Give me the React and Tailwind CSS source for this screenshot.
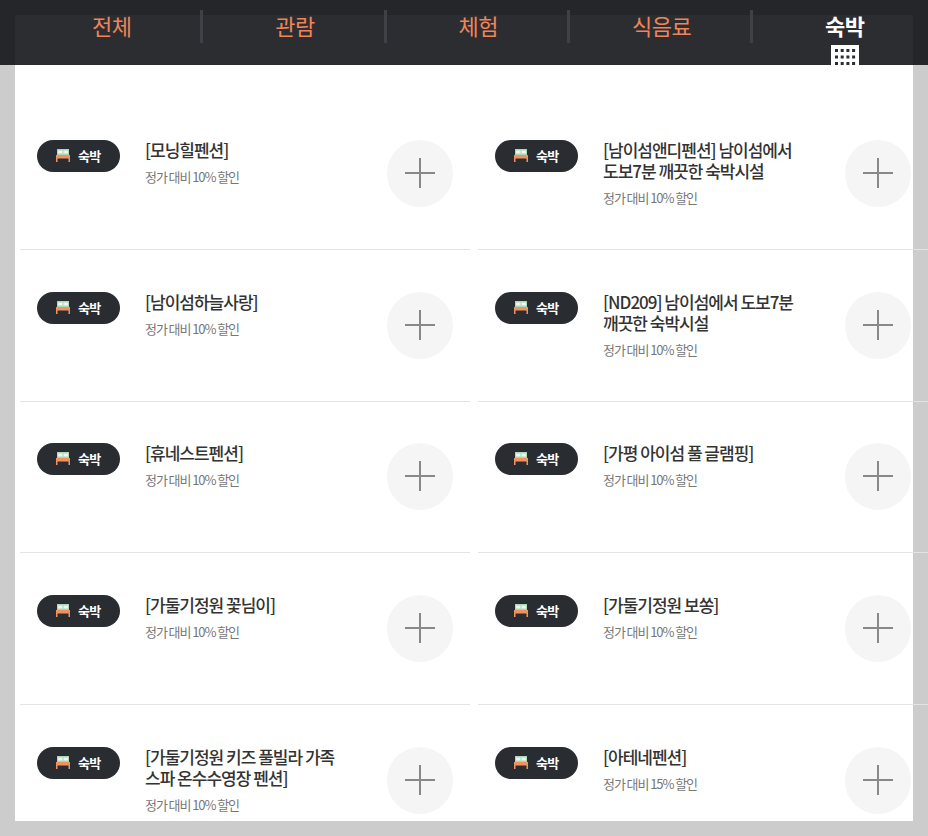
const font = { fontFamily: '"Noto Sans CJK KR", "Noto Sans", sans-serif' };

const items = [
  [["[모닝힐펜션]"], "10%"],
  [["[남이섬앤디펜션] 남이섬에서", "도보7분 깨끗한 숙박시설"], "10%"],
  [["[남이섬하늘사랑]"], "10%"],
  [["[ND209] 남이섬에서 도보7분", "깨끗한 숙박시설"], "10%"],
  [["[휴네스트펜션]"], "10%"],
  [["[가평 아이섬 풀 글램핑]"], "10%"],
  [["[가둘기정원 꽃님이]"], "10%"],
  [["[가둘기정원 보쏭]"], "10%"],
  [["[가둘기정원 키즈 풀빌라 가족", "스파 온수수영장 펜션]"], "10%"],
  [["[아테네펜션]"], "15%"],
];

function Bed() {
  return (
    <svg width="14" height="13" viewBox="0 0 14 13" className="shrink-0">
      <rect x="1" y="0" width="12" height="6" fill="#a8d8b8" />
      <rect x="2" y="1.5" width="4.5" height="3" fill="#eef5ee" />
      <rect x="7.5" y="1.5" width="4.5" height="3" fill="#eef5ee" />
      <rect x="0" y="6" width="14" height="3.5" fill="#f0915f" />
      <rect x="0" y="9" width="1.5" height="4" fill="#f0915f" />
      <rect x="12.5" y="9" width="1.5" height="4" fill="#f0915f" />
    </svg>
  );
}

function Building() {
  const dots = [];
  for (let r = 0; r < 4; r++) {
    for (let c = 0; c < 4; c++) {
      dots.push(<rect key={r + "-" + c} x={4 + c * 5.7} y={4 + r * 6.5} width="3" height="3" fill="#2a2d32" />);
    }
  }
  return (
    <svg width="28" height="28" viewBox="0 0 28 28" className="mt-[4px] shrink-0">
      <rect width="28" height="28" fill="#fff" />
      {dots}
    </svg>
  );
}

function Row({ lines, pct }) {
  return (
    <li className="h-[151.667px] border-b border-[#e4e4e4] flex items-start pt-[41.66px] pl-[17px]">
      <div className="w-[83px] h-[32px] rounded-full bg-[#292c31] flex items-center shrink-0 pl-[19px] gap-[8px] pb-[1px]">
        <Bed />
        <span className="text-[13px] leading-none font-bold text-white tracking-[-0.6px]">숙박</span>
      </div>
      <div className="w-[222px] ml-[25px] mt-[-1px] shrink-0">
        {lines.map((l) => (
          <p key={l} className="text-[17px] leading-[21px] font-medium text-[#333] tracking-[-1px] whitespace-nowrap">{l}</p>
        ))}
        <p className="text-[13px] leading-[18px] mt-[8px] text-[#777] tracking-[-1.08px] whitespace-nowrap">정가 대비 {pct} 할인</p>
      </div>
      <div className="w-[66px] h-[67px] ml-[20px] rounded-full bg-[#f5f5f5] relative shrink-0">
        <span className="absolute left-[18px] top-[32px] w-[30px] h-[2px] bg-[#888]" />
        <span className="absolute left-[32px] top-[18px] w-[2px] h-[30px] bg-[#888]" />
      </div>
    </li>
  );
}

export default function App() {
  const nav = ["전체", "관람", "체험", "식음료"];
  return (
    <div className="relative h-[836px] w-[928px] overflow-hidden bg-[#cccccc] pt-[15px] pl-[15px]" style={font}>
      <main className="w-[898px] h-[806px] bg-white">
        <ul className="grid grid-cols-[450px_450px] gap-x-[8px] w-[908px] pl-[5px] pt-[83.34px]">
          {items.map(([lines, pct], i) => (
            <Row key={i} lines={lines} pct={pct} />
          ))}
        </ul>
      </main>
      <nav className="absolute left-0 top-0 w-[928px] h-[65px] bg-[#06080c]/85 flex pl-[20px] overflow-hidden">
        {nav.map((n) => (
          <div key={n} className="w-[183.3px] h-[33px] mt-[10px] shrink-0 border-r-[3px] border-[#3e4146] flex justify-center pl-[3px]">
            <span className="text-[22px] leading-[31px] text-[#f0845a] tracking-[-0.5px]">{n}</span>
          </div>
        ))}
        <div className="w-[183.3px] mt-[10px] shrink-0 flex flex-col items-center">
          <span className="text-[22px] leading-[31px] font-bold text-white tracking-[-0.5px]">숙박</span>
          <Building />
        </div>
      </nav>
    </div>
  );
}
